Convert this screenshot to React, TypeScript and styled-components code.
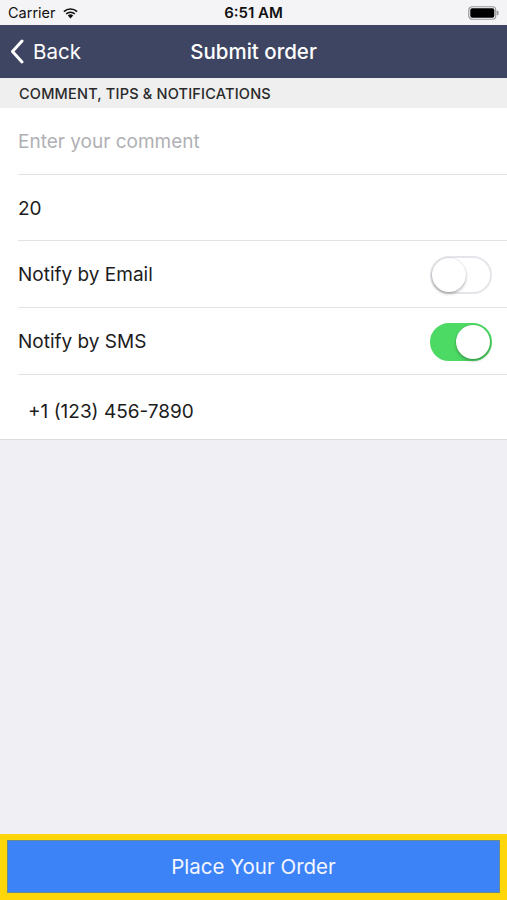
import React from "react";
import styled, { createGlobalStyle } from "styled-components";

const Global = createGlobalStyle`
  html, body { margin: 0; padding: 0; }
  body { font-family: Inter, Roboto, "Liberation Sans", sans-serif; background: #efeff4; }
  #root { min-height: 900px; }
`;

const Screen = styled.div`
  width: 507px;
  height: 900px;
  display: flex;
  flex-direction: column;
  background: #efeff4;
  overflow: hidden;
`;

const StatusBar = styled.div`
  height: 25px;
  background: #f4f4f6;
  display: grid;
  grid-template-columns: 1fr auto 1fr;
  align-items: center;
  padding: 0 8px;
  font-size: 14.5px;
  color: #111;
  box-sizing: border-box;
`;

const StatusLeft = styled.div`
  display: flex;
  align-items: center;
  gap: 6px;
`;

const StatusTime = styled.div`
  font-weight: 600;
  font-size: 15px;
`;

const StatusRight = styled.div`
  display: flex;
  justify-content: flex-end;
  align-items: center;
`;

const NavBar = styled.div`
  height: 53px;
  background: #3e4562;
  display: grid;
  grid-template-columns: 1fr auto 1fr;
  align-items: center;
  color: #fff;
  padding: 0 10px;
  box-sizing: border-box;
`;

const BackButton = styled.div`
  display: flex;
  align-items: center;
  gap: 9px;
  font-size: 20.5px;
`;

const NavTitle = styled.div`
  font-size: 20.5px;
  font-weight: 500;
`;

const SectionHeader = styled.div`
  height: 30px;
  background: #efefef;
  display: flex;
  align-items: center;
  padding-left: 19px;
  font-size: 14.5px;
  font-weight: 500;
  color: #2a2a2a;
  letter-spacing: 0.2px;
`;

const List = styled.div`
  background: #fff;
  border-bottom: 1px solid #dcdce0;
`;

const Row = styled.div<{ $indent?: number; $last?: boolean; $height?: number; $shift?: number }>`
  height: ${(p) => p.$height ?? 66}px;
  display: flex;
  align-items: center;
  justify-content: space-between;
  padding-left: ${(p) => p.$indent ?? 18}px;
  padding-right: 15px;
  padding-top: ${(p) => p.$shift ?? 0}px;
  box-sizing: border-box;
  position: relative;
  font-size: 19px;
  color: #1c1c1c;
  &::after {
    content: "";
    display: ${(p) => (p.$last ? "none" : "block")};
    position: absolute;
    left: 18px;
    right: 0;
    bottom: 0;
    height: 1.5px;
    background: #e2e2e6;
  }
`;

const Placeholder = styled.span`
  color: #b0b0b4;
`;

const Switch = styled.div<{ $on?: boolean }>`
  width: 62px;
  height: 38px;
  border-radius: 19px;
  box-sizing: border-box;
  background: ${(p) => (p.$on ? "#4cd964" : "#fff")};
  border: 2px solid ${(p) => (p.$on ? "#4cd964" : "#e5e5ea")};
  display: flex;
  justify-content: ${(p) => (p.$on ? "flex-end" : "flex-start")};
  align-items: center;
`;

const Knob = styled.div`
  width: 34px;
  height: 34px;
  border-radius: 50%;
  background: #fff;
  box-shadow: 0 2px 3px rgba(0, 0, 0, 0.25), 0 0 0 0.5px rgba(0, 0, 0, 0.1);
`;

const Spacer = styled.div`
  flex: 1;
`;

const Footer = styled.div`
  height: 66px;
  background: #ffd60a;
  padding: 6px 7px 7px 7px;
  box-sizing: border-box;
`;

const OrderButton = styled.div`
  height: 100%;
  background: #3d83f8;
  border: 1px solid #6b8a8e;
  box-sizing: border-box;
  display: flex;
  align-items: center;
  justify-content: center;
  color: #f4f6ff;
  font-size: 20.5px;
`;

export default function App() {
  return (
    <>
      <Global />
      <Screen>
        <StatusBar>
          <StatusLeft>
            <span>Carrier</span>
            <svg width="17" height="12" viewBox="0 0 17 12">
              <path d="M8.5 11.5 L5.8 8.6 A3.9 3.9 0 0 1 11.2 8.6 Z" fill="#111" />
              <path d="M3.6 6.4 A7 7 0 0 1 13.4 6.4 L12.2 7.6 A5.3 5.3 0 0 0 4.8 7.6 Z" fill="#111" />
              <path d="M1.3 4.1 A10.3 10.3 0 0 1 15.7 4.1 L14.5 5.3 A8.6 8.6 0 0 0 2.5 5.3 Z" fill="#111" />
            </svg>
          </StatusLeft>
          <StatusTime>6:51 AM</StatusTime>
          <StatusRight>
            <svg width="31" height="14" viewBox="0 0 31 14">
              <rect x="0.75" y="0.75" width="27" height="12.5" rx="3.5" fill="none" stroke="#999" strokeWidth="1.2" />
              <rect x="2.3" y="2.3" width="24" height="9.4" rx="2" fill="#000" />
              <rect x="28.8" y="4.8" width="1.7" height="4.4" rx="0.8" fill="#999" />
            </svg>
          </StatusRight>
        </StatusBar>
        <NavBar>
          <BackButton>
            <svg width="14" height="25" viewBox="0 0 14 25">
              <path d="M12 2 L2.5 12.5 L12 23" fill="none" stroke="#fff" strokeWidth="3" strokeLinecap="round" strokeLinejoin="round" />
            </svg>
            <span>Back</span>
          </BackButton>
          <NavTitle>Submit order</NavTitle>
          <div />
        </NavBar>
        <SectionHeader>COMMENT, TIPS &amp; NOTIFICATIONS</SectionHeader>
        <List>
          <Row $height={67} $shift={0}>
            <Placeholder>Enter your comment</Placeholder>
          </Row>
          <Row>
            <span>20</span>
          </Row>
          <Row $height={67}>
            <span>Notify by Email</span>
            <Switch>
              <Knob />
            </Switch>
          </Row>
          <Row $height={67}>
            <span>Notify by SMS</span>
            <Switch $on>
              <Knob />
            </Switch>
          </Row>
          <Row $indent={28} $last $height={64} $shift={8}>
            <span>+1 (123) 456-7890</span>
          </Row>
        </List>
        <Spacer />
        <Footer>
          <OrderButton>Place Your Order</OrderButton>
        </Footer>
      </Screen>
    </>
  );
}
